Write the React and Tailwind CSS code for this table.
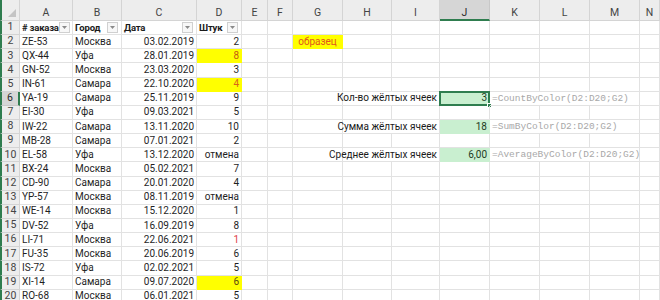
const COLS = ['A', 'B', 'C', 'D', 'E', 'F', 'G', 'H', 'I', 'J', 'K', 'L', 'M', 'N']

const ROWS = [
  ['ZE-53', 'Москва', '03.02.2019', '2'],
  ['QX-44', 'Уфа', '28.01.2019', '8'],
  ['GN-52', 'Москва', '23.03.2020', '3'],
  ['IN-61', 'Самара', '22.10.2020', '4'],
  ['YA-19', 'Самара', '25.11.2019', '9'],
  ['EI-30', 'Уфа', '09.03.2021', '5'],
  ['IW-22', 'Самара', '13.11.2020', '10'],
  ['MB-28', 'Самара', '07.01.2021', '2'],
  ['EL-58', 'Уфа', '13.12.2020', 'отмена'],
  ['BX-24', 'Москва', '05.02.2021', '7'],
  ['CD-90', 'Самара', '20.01.2020', '4'],
  ['YP-57', 'Москва', '08.11.2019', 'отмена'],
  ['WE-14', 'Москва', '15.12.2020', '1'],
  ['DV-52', 'Уфа', '16.09.2019', '8'],
  ['LI-71', 'Москва', '22.06.2021', '1'],
  ['FU-35', 'Москва', '20.06.2019', '6'],
  ['IS-72', 'Уфа', '02.02.2021', '5'],
  ['XI-14', 'Самара', '09.07.2020', '6'],
  ['RO-68', 'Москва', '06.01.2021', '5'],
]

// формат ячеек столбца D по номеру строки
const QTY_STYLE = {
  3: 'bg-[#ffff00] border-[#ffff00] text-[#c55a11]',
  5: 'bg-[#ffff00] border-[#ffff00] text-[#d9651a]',
  16: 'text-[#e0404a]',
  19: 'bg-[#ffff00] border-[#ffff00] text-[#5b4a10]',
}

const RESULTS = {
  6: { label: 'Кол-во жёлтых ячеек', value: '3', formula: '=CountByColor(D2:D20;G2)', active: true },
  8: { label: 'Сумма жёлтых ячеек', value: '18', formula: '=SumByColor(D2:D20;G2)' },
  10: { label: 'Среднее жёлтых ячеек', value: '6,00', formula: '=AverageByColor(D2:D20;G2)' },
}

function Cell({ className = '', children }) {
  return (
    <div className={'relative flex items-center px-[2px] border-r border-b whitespace-nowrap leading-none ' + (className.includes('border-[') ? '' : 'border-[#e2e2e2] ') + className}>
      {children}
    </div>
  )
}

function FilterButton() {
  return (
    <span className="ml-auto mr-[1px] flex h-[11px] w-[11px] shrink-0 items-center justify-center border border-[#d0d0d0] bg-[#f7f7f7]">
      <svg width="5" height="3" viewBox="0 0 5 3">
        <path d="M0 0h5L2.5 3z" fill="#8a8a8a" />
      </svg>
    </span>
  )
}

function HeaderCell({ children }) {
  return (
    <Cell className="font-bold text-[9.5px] tracking-[-0.2px] text-[#1a1a1a]">
      <span>{children}</span>
      <FilterButton />
    </Cell>
  )
}

export default function App() {
  return (
    <div className="relative h-[300px] w-[660px] overflow-hidden bg-white font-['Roboto',sans-serif] text-[10px] text-[#1f1f1f]">
      <div className="grid grid-cols-[20px_53px_49px_75px_45px_26px_25px_50px_49px_48px_50px_50px_50px_50px_20px] grid-rows-[21px_repeat(20,14.15px)]">
        {/* шапка столбцов */}
        <div className="relative border-r border-b border-l-2 border-r-[#d4d4d4] border-b-[#d4d4d4] border-l-[#2f7d4f] bg-[#ededed]">
          <svg className="absolute bottom-[3px] right-[3px]" width="8" height="8" viewBox="0 0 8 8">
            <path d="M8 0v8H0z" fill="#c4c4c4" />
          </svg>
        </div>
        {COLS.map((c) => (
          <div
            key={c}
            className={
              c === 'J'
                ? 'flex justify-center border-r border-b-2 border-r-[#c8c8c8] border-b-[#2f7d4f] bg-[#d6d6d6] pt-[8px] text-[10.5px] leading-none text-[#2b2b2b]'
                : 'flex justify-center border-r border-b border-[#d4d4d4] bg-[#ededed] pt-[8px] text-[10.5px] leading-none text-[#444]'
            }
          >
            {c}
          </div>
        ))}

        {Array.from({ length: 20 }, (_, i) => {
          const r = i + 1
          const row = r === 1 ? null : ROWS[r - 2]
          const res = RESULTS[r]
          return (
            <div key={r} className="contents">
              <div
                className={
                  r === 6
                    ? 'flex items-center justify-center border-r-2 border-b border-l-2 border-r-[#2f7d4f] border-b-[#c8c8c8] border-l-[#2f7d4f] bg-[#d6d6d6] text-[10.5px] leading-none text-[#2b2b2b]'
                    : 'flex items-center justify-center border-r border-b border-l-2 border-r-[#d4d4d4] border-b-[#d4d4d4] border-l-[#2f7d4f] bg-[#ededed] text-[10.5px] leading-none text-[#444]'
                }
              >
                {r}
              </div>

              {r === 1 ? (
                <>
                  <HeaderCell># заказа</HeaderCell>
                  <HeaderCell>Город</HeaderCell>
                  <HeaderCell>Дата</HeaderCell>
                  <HeaderCell>Штук</HeaderCell>
                </>
              ) : (
                <>
                  <Cell>{row[0]}</Cell>
                  <Cell>{row[1]}</Cell>
                  <Cell className="justify-end">{row[2]}</Cell>
                  <Cell className={'justify-end ' + (QTY_STYLE[r] || '')}>{row[3]}</Cell>
                </>
              )}

              <Cell />
              <Cell />
              {r === 2 ? (
                <Cell className="justify-center bg-[#ffff00] border-[#ffff00] text-[#e2561c]">образец</Cell>
              ) : (
                <Cell />
              )}

              {res ? (
                <>
                  <Cell className="col-span-2 justify-end text-[#1a1a1a]">{res.label}</Cell>
                  <Cell className="justify-end bg-[#c9efd0] border-[#c9efd0] text-[#1e3b1e]">
                    {res.value}
                    {res.active && (
                      <>
                        <span className="pointer-events-none absolute -top-px -left-px -right-px -bottom-px border-2 border-[#2f7d4f]" />
                        <span className="absolute -right-[3px] -bottom-[3px] h-[5px] w-[5px] border border-white bg-[#2f7d4f]" />
                      </>
                    )}
                  </Cell>
                  <Cell className="col-span-3 font-['Liberation_Mono',monospace] text-[9.5px] text-[#a8a8a8]">{res.formula}</Cell>
                </>
              ) : (
                <>
                  <Cell />
                  <Cell />
                  <Cell />
                  <Cell />
                  <Cell />
                  <Cell />
                </>
              )}
              <Cell />
            </div>
          )
        })}
      </div>
    </div>
  )
}
